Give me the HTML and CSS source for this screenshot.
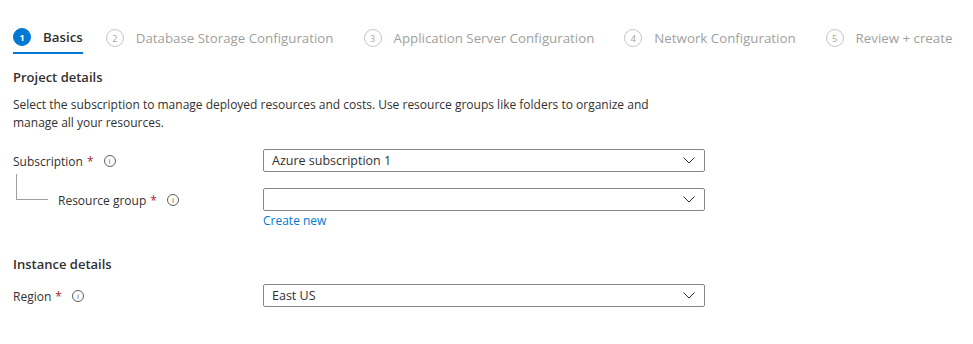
FILE: index.html
```html
<!DOCTYPE html>
<html lang="en">
<head>
    <meta charset="UTF-8">
    <title>Create - Basics</title>
    <link rel="stylesheet" href="styles.css">
</head>
<body>
    <nav class="steps">
        <a href="#" class="step active"><span class="step-num">1</span><span class="step-label">Basics</span></a>
        <a href="#" class="step"><span class="step-num">2</span><span class="step-label">Database Storage Configuration</span></a>
        <a href="#" class="step"><span class="step-num">3</span><span class="step-label">Application Server Configuration</span></a>
        <a href="#" class="step"><span class="step-num">4</span><span class="step-label">Network Configuration</span></a>
        <a href="#" class="step"><span class="step-num">5</span><span class="step-label">Review + create</span></a>
    </nav>

    <section class="section">
        <h2>Project details</h2>
        <p class="desc">Select the subscription to manage deployed resources and costs. Use resource groups like folders to organize and manage all your resources.</p>

        <div class="field">
            <label class="field-label">Subscription <span class="req">*</span> <span class="info">i</span></label>
            <div class="select"><span>Azure subscription 1</span><svg class="chev" viewBox="0 0 12 7"><path d="M0.5 0.5 L6 6 L11.5 0.5" /></svg></div>
        </div>

        <div class="field child">
            <label class="field-label"><span class="tree"></span>Resource group <span class="req">*</span> <span class="info">i</span></label>
            <div class="control">
                <div class="select"><span></span><svg class="chev" viewBox="0 0 12 7"><path d="M0.5 0.5 L6 6 L11.5 0.5" /></svg></div>
                <a href="#" class="link">Create new</a>
            </div>
        </div>
    </section>

    <section class="section">
        <h2>Instance details</h2>
        <div class="field">
            <label class="field-label">Region <span class="req">*</span> <span class="info">i</span></label>
            <div class="select"><span>East US</span><svg class="chev" viewBox="0 0 12 7"><path d="M0.5 0.5 L6 6 L11.5 0.5" /></svg></div>
        </div>
    </section>
</body>
</html>
```

FILE: styles.css
```css
* { margin: 0; padding: 0; box-sizing: border-box; }

body {
    font-family: 'Open Sans', 'Noto Sans', sans-serif;
    font-size: 12px;
    color: #323130;
    background: #ffffff;
    padding: 0 13px;
}

.steps {
    display: flex;
    align-items: flex-start;
    gap: 30px;
    padding-top: 29px;
}

.step {
    display: flex;
    align-items: center;
    gap: 12px;
    height: 25px;
    padding-bottom: 7px;
    text-decoration: none;
    color: #a19f9d;
    font-size: 13.3px;
    white-space: nowrap;
}

.step.active {
    color: #323130;
    font-weight: 600;
    border-bottom: 2px solid #0078d4;
    margin-right: -7px;
}

.step-num {
    width: 18px;
    height: 18px;
    border: 1px solid #c8c6c4;
    border-radius: 50%;
    display: flex;
    align-items: center;
    justify-content: center;
    font-size: 9px;
    font-weight: 400;
    color: #a19f9d;
}

.step.active .step-num {
    background: #0078d4;
    border-color: #0078d4;
    color: #ffffff;
    font-weight: 700;
}

.section { padding-top: 13px; }
.section + .section { padding-top: 8px; }

h2 {
    font-size: 13px;
    font-weight: 600;
    line-height: 20px;
    margin-bottom: 9px;
}

.section + .section h2 { margin-bottom: 10px; }

.desc {
    line-height: 18px;
    max-width: 672px;
    margin-bottom: 17px;
}

.field {
    display: flex;
    align-items: flex-start;
    margin-bottom: 15px;
}

.field-label {
    width: 250px;
    flex-shrink: 0;
    display: flex;
    align-items: center;
    gap: 4px;
    height: 24px;
}

.child .field-label {
    padding-left: 45px;
    position: relative;
}

.tree {
    position: absolute;
    left: 3px;
    top: -14px;
    width: 32px;
    height: 26px;
    border-left: 1px solid #a19f9d;
    border-bottom: 1px solid #a19f9d;
}

.req { color: #a4262c; margin-right: 6px; }

.info {
    width: 12px;
    height: 12px;
    border: 1px solid #605e5c;
    border-radius: 50%;
    font-size: 8px;
    line-height: 10px;
    text-align: center;
    color: #605e5c;
}

.control { display: flex; flex-direction: column; }

.select {
    width: 442px;
    height: 23px;
    border: 1px solid #8a8886;
    border-radius: 2px;
    display: flex;
    align-items: center;
    justify-content: space-between;
    padding: 0 9px 0 8px;
    font-size: 12.5px;
}

.chev {
    width: 12px;
    height: 7px;
    fill: none;
    stroke: #323130;
    stroke-width: 1;
}

.link {
    color: #0078d4;
    text-decoration: none;
    line-height: 20px;
}
```
